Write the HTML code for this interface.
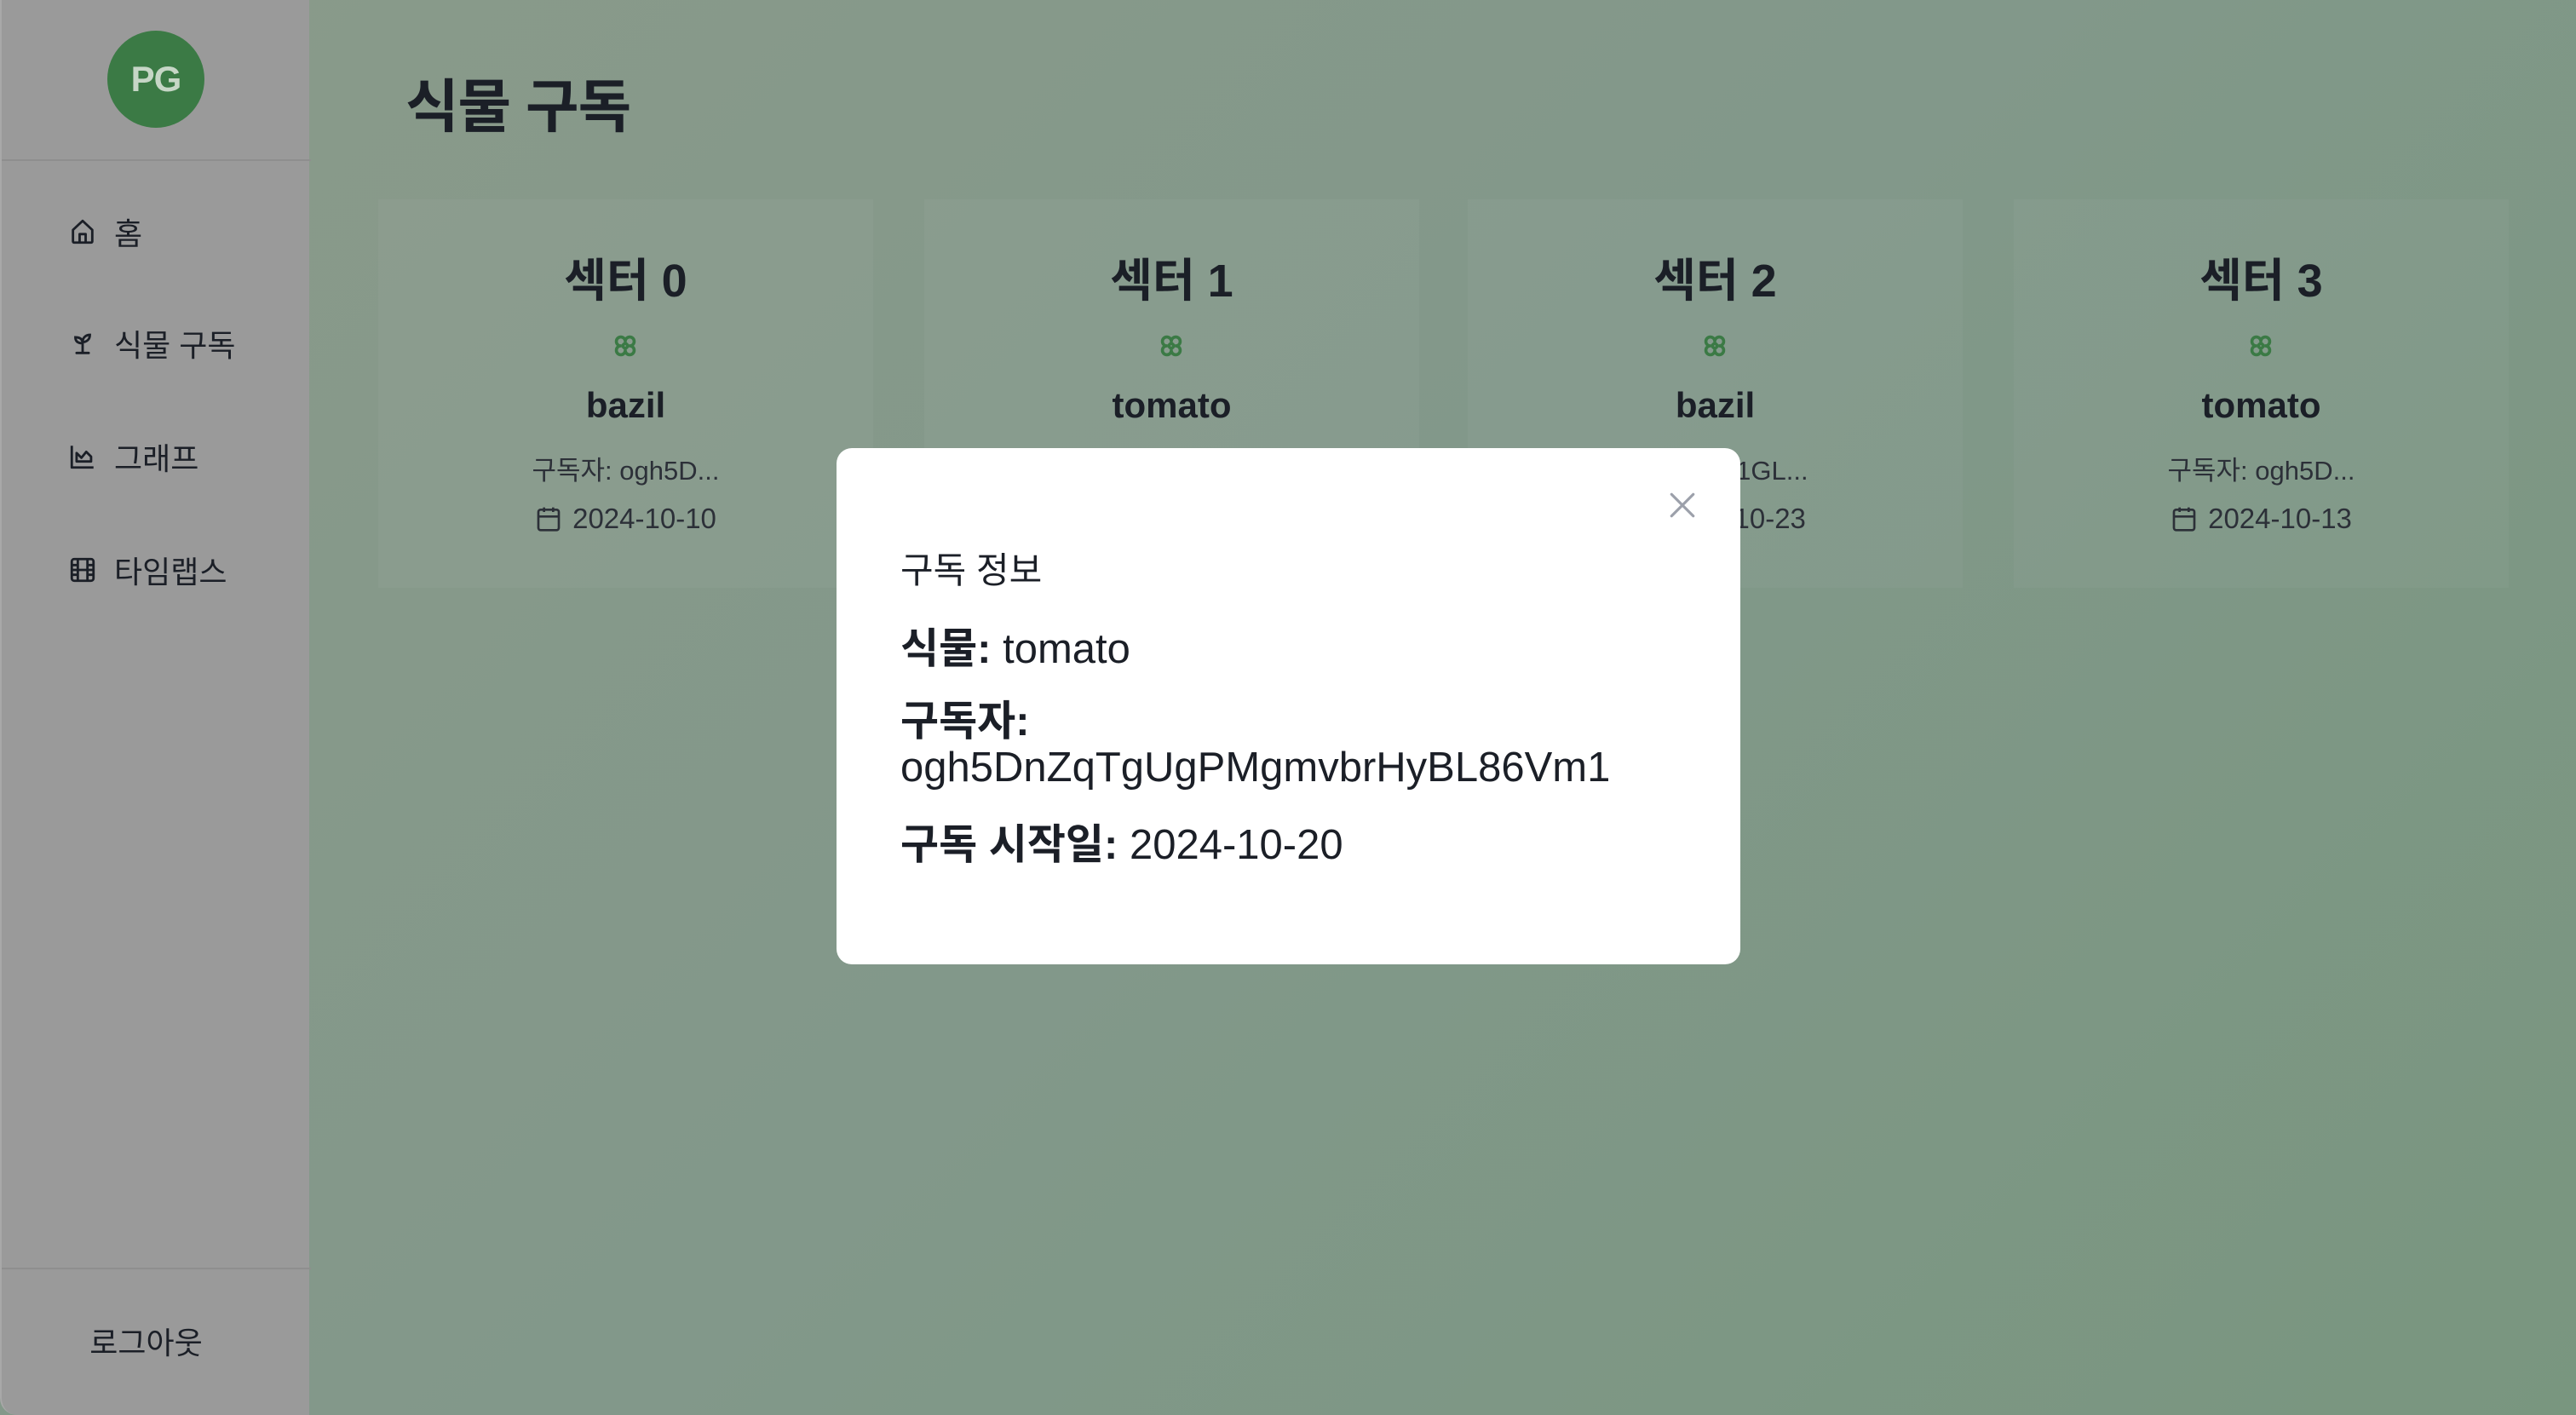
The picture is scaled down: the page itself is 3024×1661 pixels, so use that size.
<!DOCTYPE html>
<html><head><meta charset="utf-8">
<style>
*{margin:0;padding:0;box-sizing:border-box}
html,body{width:3024px;height:1661px;overflow:hidden}
body{font-family:"Liberation Sans","Noto Sans CJK KR",sans-serif;color:#1b1f27;background:linear-gradient(135deg,#8a9a8a 0%,#82988a 50%,#79967f 100%);position:relative}
.side{position:absolute;left:0;top:0;width:363px;height:1661px;background:#9a9a9a;border-left:2px solid #a8a8a8;border-bottom-left-radius:20px}
.av{position:absolute;left:124px;top:36px;width:114px;height:114px;border-radius:50%;background:#3b7a45;color:#c6d6c6;font-weight:bold;font-size:42px;line-height:114px;text-align:center;letter-spacing:-1px}
.hr{position:absolute;left:0;width:363px;height:2px;background:#8e8e8e}
.nav{position:absolute;left:78px;display:flex;align-items:center;font-size:36px;color:#1b1f27}
.nav svg{width:34px;height:34px;margin-right:20px}
.logout{position:absolute;left:-12px;width:363px;top:1548px;text-align:center;font-size:36px}
h1{position:absolute;left:476px;top:70px;font-size:68px;font-weight:bold;letter-spacing:-1px}
.card{position:absolute;top:234px;width:581px;height:456px;background:rgba(255,255,255,0.035);text-align:center}
.card .t{position:absolute;top:51px;width:100%;font-size:54px;font-weight:bold}
.card .ic{position:absolute;left:272px;top:154px;width:36px;height:36px}
.card .n{position:absolute;width:100%;top:218px;font-size:42px;font-weight:bold}
.card .s{position:absolute;width:100%;top:293px;font-size:31px;color:#2c3038}
.card .d{position:absolute;width:100%;top:356px;font-size:33px;color:#2c3038;display:flex;justify-content:center;align-items:center}
.card .d svg{width:32px;height:34px;margin-right:12px}
.modal{position:absolute;left:982px;top:526px;width:1061px;height:606px;background:#fff;border-radius:18px}
.modal .x{position:absolute;left:976px;top:50px;width:34px;height:34px}
.m1{position:absolute;left:75px;top:110px;font-size:42px}
.m2{position:absolute;left:75px;top:196px;font-size:49px}
.m3{position:absolute;left:75px;top:294px;font-size:49px;line-height:54px}
.m4{position:absolute;left:75px;top:426px;font-size:49px}
b{font-weight:bold}
</style></head><body>
<div class="side">
<div class="av">PG</div>
<div class="hr" style="top:187px"></div>
<div class="nav" style="top:246px"><svg viewBox="0 0 24 24" fill="none" stroke="#1b1f27" stroke-width="2" stroke-linejoin="round"><path d="M4 10.5L12 3l8 7.5V20a1 1 0 0 1-1 1H5a1 1 0 0 1-1-1z"/><path d="M9.5 21v-7h5v7"/></svg>홈</div>
<div class="nav" style="top:377px"><svg viewBox="0 0 24 24" fill="none" stroke="#1b1f27" stroke-width="2" stroke-linecap="round"><path d="M7 20h10M12 20v-8M12 12c-3 0-6-1-6-5 3 0 6 1 6 5zM12 11c0-4 3-6 6-6 0 4-3 6-6 6z"/></svg>식물 구독</div>
<div class="nav" style="top:510px"><svg viewBox="0 0 24 24" fill="none" stroke="#1b1f27" stroke-width="2" stroke-linejoin="round"><path d="M3 3v18h18"/><path d="M7 16V9l4 4 4-5 4 4v4z"/></svg>그래프</div>
<div class="nav" style="top:643px"><svg viewBox="0 0 24 24" fill="none" stroke="#1b1f27" stroke-width="2"><rect x="3" y="3" width="18" height="18" rx="2"/><path d="M8 3v18M16 3v18M3 8h5M3 12h18M3 16h5M16 8h5M16 16h5"/></svg>타임랩스</div>
<div class="hr" style="top:1488px"></div>
<div class="logout">로그아웃</div>
</div>
<h1>식물 구독</h1>

<div class="card" style="left:444px"><div class="t">섹터 0</div><svg class="ic" viewBox="0 0 24 24" fill="none" stroke="#3b7a45" stroke-width="2.4"><path d="M12 9a3.5 3.5 0 1 0-3 3 3.5 3.5 0 1 0 3 3 3.5 3.5 0 1 0 3-3 3.5 3.5 0 1 0-3-3z"/><circle cx="12" cy="12" r="1.8"/></svg><div class="n">bazil</div><div class="s">구독자: ogh5D...</div><div class="d"><svg viewBox="0 0 24 24" fill="none" stroke="#2c3038" stroke-width="2"><rect x="3" y="4" width="18" height="18" rx="2"/><path d="M3 10h18M8 2v4M16 2v4"/></svg>2024-10-10</div></div>
<div class="card" style="left:1085px"><div class="t">섹터 1</div><svg class="ic" viewBox="0 0 24 24" fill="none" stroke="#3b7a45" stroke-width="2.4"><path d="M12 9a3.5 3.5 0 1 0-3 3 3.5 3.5 0 1 0 3 3 3.5 3.5 0 1 0 3-3 3.5 3.5 0 1 0-3-3z"/><circle cx="12" cy="12" r="1.8"/></svg><div class="n">tomato</div><div class="s">구독자: ogh5D...</div><div class="d"><svg viewBox="0 0 24 24" fill="none" stroke="#2c3038" stroke-width="2"><rect x="3" y="4" width="18" height="18" rx="2"/><path d="M3 10h18M8 2v4M16 2v4"/></svg>2024-10-20</div></div>
<div class="card" style="left:1723px"><div class="t">섹터 2</div><svg class="ic" viewBox="0 0 24 24" fill="none" stroke="#3b7a45" stroke-width="2.4"><path d="M12 9a3.5 3.5 0 1 0-3 3 3.5 3.5 0 1 0 3 3 3.5 3.5 0 1 0 3-3 3.5 3.5 0 1 0-3-3z"/><circle cx="12" cy="12" r="1.8"/></svg><div class="n">bazil</div><div class="s">구독자: rX1GL...</div><div class="d"><svg viewBox="0 0 24 24" fill="none" stroke="#2c3038" stroke-width="2"><rect x="3" y="4" width="18" height="18" rx="2"/><path d="M3 10h18M8 2v4M16 2v4"/></svg>2024-10-23</div></div>
<div class="card" style="left:2364px"><div class="t">섹터 3</div><svg class="ic" viewBox="0 0 24 24" fill="none" stroke="#3b7a45" stroke-width="2.4"><path d="M12 9a3.5 3.5 0 1 0-3 3 3.5 3.5 0 1 0 3 3 3.5 3.5 0 1 0 3-3 3.5 3.5 0 1 0-3-3z"/><circle cx="12" cy="12" r="1.8"/></svg><div class="n">tomato</div><div class="s">구독자: ogh5D...</div><div class="d"><svg viewBox="0 0 24 24" fill="none" stroke="#2c3038" stroke-width="2"><rect x="3" y="4" width="18" height="18" rx="2"/><path d="M3 10h18M8 2v4M16 2v4"/></svg>2024-10-13</div></div>

<div class="modal">
<svg class="x" viewBox="0 0 24 24" fill="none" stroke="#9ca0aa" stroke-width="2.2" stroke-linecap="round"><path d="M3 3l18 18M21 3L3 21"/></svg>
<div class="m1">구독 정보</div>
<div class="m2"><b>식물:</b> tomato</div>
<div class="m3"><b>구독자:</b><br>ogh5DnZqTgUgPMgmvbrHyBL86Vm1</div>
<div class="m4"><b>구독 시작일:</b> 2024-10-20</div>
</div>
</body></html>
